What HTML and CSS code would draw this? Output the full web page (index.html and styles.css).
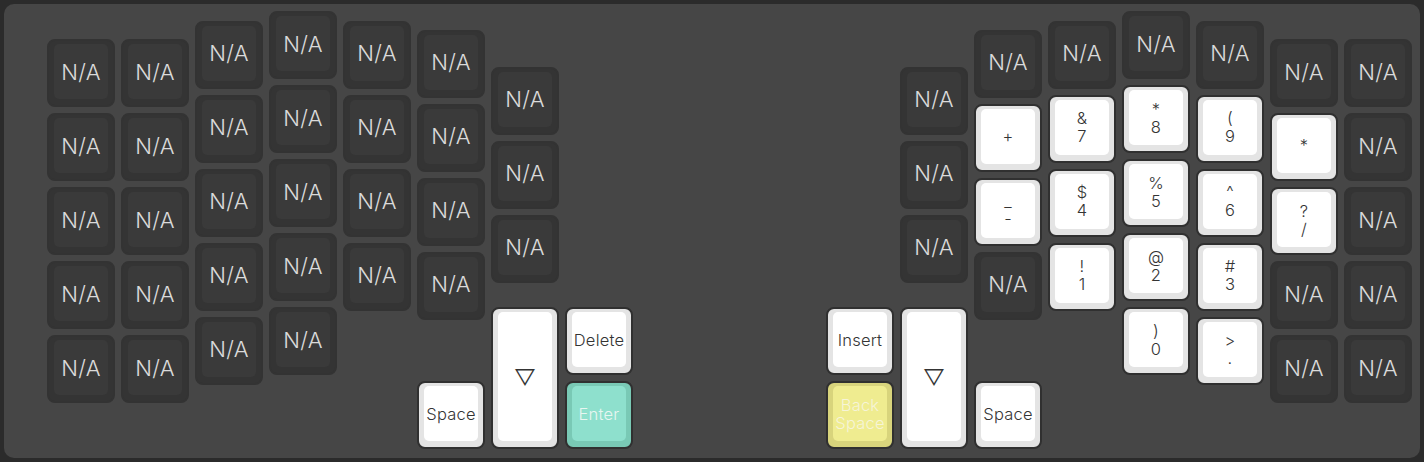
FILE: index.html
```html
<!DOCTYPE html>
<html lang="en">
<head>
<meta charset="utf-8">
<title>Keymap</title>
<link rel="stylesheet" href="styles.css">
</head>
<body>
<div class="board">
  <div class="half">
    <div class="col off-0">
      <div class="key dark"><div class="face">N/A</div></div>
      <div class="key dark"><div class="face">N/A</div></div>
      <div class="key dark"><div class="face">N/A</div></div>
      <div class="key dark"><div class="face">N/A</div></div>
      <div class="key dark"><div class="face">N/A</div></div>
    </div>
    <div class="col off-0">
      <div class="key dark"><div class="face">N/A</div></div>
      <div class="key dark"><div class="face">N/A</div></div>
      <div class="key dark"><div class="face">N/A</div></div>
      <div class="key dark"><div class="face">N/A</div></div>
      <div class="key dark"><div class="face">N/A</div></div>
    </div>
    <div class="col off-m25">
      <div class="key dark"><div class="face">N/A</div></div>
      <div class="key dark"><div class="face">N/A</div></div>
      <div class="key dark"><div class="face">N/A</div></div>
      <div class="key dark"><div class="face">N/A</div></div>
      <div class="key dark"><div class="face">N/A</div></div>
    </div>
    <div class="col off-m375">
      <div class="key dark"><div class="face">N/A</div></div>
      <div class="key dark"><div class="face">N/A</div></div>
      <div class="key dark"><div class="face">N/A</div></div>
      <div class="key dark"><div class="face">N/A</div></div>
      <div class="key dark"><div class="face">N/A</div></div>
    </div>
    <div class="col off-m25">
      <div class="key dark"><div class="face">N/A</div></div>
      <div class="key dark"><div class="face">N/A</div></div>
      <div class="key dark"><div class="face">N/A</div></div>
      <div class="key dark"><div class="face">N/A</div></div>
    </div>
    <div class="col off-m125">
      <div class="key dark"><div class="face">N/A</div></div>
      <div class="key dark"><div class="face">N/A</div></div>
      <div class="key dark"><div class="face">N/A</div></div>
      <div class="key dark"><div class="face">N/A</div></div>
      <div class="key light drop-space"><div class="face small">Space</div></div>
    </div>
    <div class="col off-p375">
      <div class="key dark"><div class="face">N/A</div></div>
      <div class="key dark"><div class="face">N/A</div></div>
      <div class="key dark"><div class="face">N/A</div></div>
      <div class="key light tall drop-tall"><div class="face tri">&#9661;</div></div>
    </div>
    <div class="col off-thumb">
      <div class="key light"><div class="face small">Delete</div></div>
      <div class="key teal"><div class="face small">Enter</div></div>
    </div>
  </div>

  <div class="half">
    <div class="col off-thumb">
      <div class="key light"><div class="face small">Insert</div></div>
      <div class="key yellow"><div class="face small two"><span>Back</span><span>Space</span></div></div>
    </div>
    <div class="col off-p375">
      <div class="key dark"><div class="face">N/A</div></div>
      <div class="key dark"><div class="face">N/A</div></div>
      <div class="key dark"><div class="face">N/A</div></div>
      <div class="key light tall drop-tall"><div class="face tri">&#9661;</div></div>
    </div>
    <div class="col off-m125">
      <div class="key dark"><div class="face">N/A</div></div>
      <div class="key light"><div class="face small">+</div></div>
      <div class="key light"><div class="face small two"><span>_</span><span>-</span></div></div>
      <div class="key dark"><div class="face">N/A</div></div>
      <div class="key light drop-space"><div class="face small">Space</div></div>
    </div>
    <div class="col off-m25">
      <div class="key dark"><div class="face">N/A</div></div>
      <div class="key light"><div class="face small two"><span>&amp;</span><span>7</span></div></div>
      <div class="key light"><div class="face small two"><span>$</span><span>4</span></div></div>
      <div class="key light"><div class="face small two"><span>!</span><span>1</span></div></div>
    </div>
    <div class="col off-m375">
      <div class="key dark"><div class="face">N/A</div></div>
      <div class="key light"><div class="face small two"><span>*</span><span>8</span></div></div>
      <div class="key light"><div class="face small two"><span>%</span><span>5</span></div></div>
      <div class="key light"><div class="face small two"><span>@</span><span>2</span></div></div>
      <div class="key light"><div class="face small two"><span>)</span><span>0</span></div></div>
    </div>
    <div class="col off-m25">
      <div class="key dark"><div class="face">N/A</div></div>
      <div class="key light"><div class="face small two"><span>(</span><span>9</span></div></div>
      <div class="key light"><div class="face small two"><span>^</span><span>6</span></div></div>
      <div class="key light"><div class="face small two"><span>#</span><span>3</span></div></div>
      <div class="key light"><div class="face small two"><span>&gt;</span><span>.</span></div></div>
    </div>
    <div class="col off-0">
      <div class="key dark"><div class="face">N/A</div></div>
      <div class="key light"><div class="face small">*</div></div>
      <div class="key light"><div class="face small two"><span>?</span><span>/</span></div></div>
      <div class="key dark"><div class="face">N/A</div></div>
      <div class="key dark"><div class="face">N/A</div></div>
    </div>
    <div class="col off-0">
      <div class="key dark"><div class="face">N/A</div></div>
      <div class="key dark"><div class="face">N/A</div></div>
      <div class="key dark"><div class="face">N/A</div></div>
      <div class="key dark"><div class="face">N/A</div></div>
      <div class="key dark"><div class="face">N/A</div></div>
    </div>
  </div>
</div>
</body>
</html>
```

FILE: styles.css
```css
html, body {
  margin: 0;
  padding: 0;
  background: #2b2b2b;
}

body {
  width: 1424px;
  height: 462px;
  overflow: hidden;
  font-family: Inter, "Noto Sans", "Liberation Sans", sans-serif;
  font-weight: 300;
}

.board {
  margin: 4px;
  width: 1416px;
  height: 454px;
  box-sizing: border-box;
  background: #464646;
  border-radius: 10px;
  display: flex;
  justify-content: space-between;
  padding: 0 8px 0 43px;
}

.half {
  display: flex;
  gap: 6px;
  align-items: flex-start;
}

.col {
  display: flex;
  flex-direction: column;
  gap: 6px;
  width: 68px;
}

.off-0 { padding-top: 35px; }
.off-m25 { padding-top: 16.5px; }
.off-m375 { padding-top: 7.25px; }
.off-m125 { padding-top: 25.75px; }
.off-p375 { padding-top: 62.75px; }
.off-thumb { padding-top: 303.25px; }

.drop-space { margin-top: 55.5px; }
.drop-tall { margin-top: 18.5px; }

.key {
  width: 68px;
  height: 68px;
  box-sizing: border-box;
  border: 2px solid #323232;
  border-radius: 8px;
  padding: 3px 5px 6px 5px;
}

.key.tall { height: 142px; }

.face {
  height: 100%;
  border-radius: 5px;
  display: flex;
  align-items: center;
  justify-content: center;
  text-align: center;
  font-size: 22px;
  letter-spacing: 0.3px;
  line-height: 1;
}

.dark { background: #343434; border-color: #333333; }
.dark .face { background: #3a3a3a; color: #dadada; }

.light { background: #e4e4e4; border-color: #303030; }
.light .face { background: #ffffff; color: #343434; }

.teal { background: #79c9b5; border-color: #303030; }
.teal .face { background: #8ee0cd; color: #e8f6f1; }

.yellow { background: #d8d47c; border-color: #303030; }
.yellow .face { background: #efec90; color: #f6f4d8; }

.face.small { font-size: 16.5px; letter-spacing: 0.2px; }

.face.two {
  flex-direction: column;
  line-height: 18px;
}

.face.tri { font-size: 22px; letter-spacing: 0; }
```
